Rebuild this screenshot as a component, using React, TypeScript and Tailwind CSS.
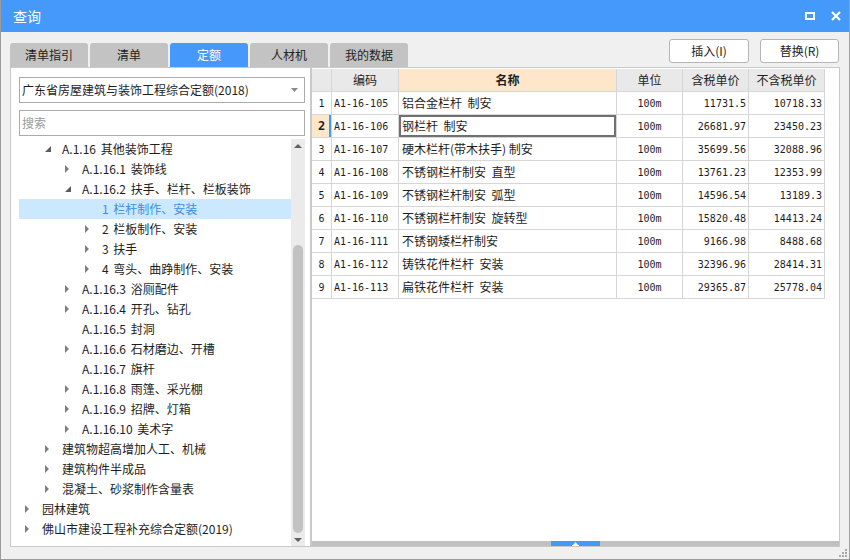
import type { ReactNode } from 'react';

type Arrow = 'open' | 'closed' | 'none';

interface TreeNode {
  level: number;
  text: string;
  arrow: Arrow;
  selected?: boolean;
}

const tree: TreeNode[] = [
  { level: 1, text: 'A.1.16 其他装饰工程', arrow: 'open' },
  { level: 2, text: 'A.1.16.1 装饰线', arrow: 'closed' },
  { level: 2, text: 'A.1.16.2 扶手、栏杆、栏板装饰', arrow: 'open' },
  { level: 3, text: '1 栏杆制作、安装', arrow: 'none', selected: true },
  { level: 3, text: '2 栏板制作、安装', arrow: 'closed' },
  { level: 3, text: '3 扶手', arrow: 'closed' },
  { level: 3, text: '4 弯头、曲踭制作、安装', arrow: 'closed' },
  { level: 2, text: 'A.1.16.3 浴厕配件', arrow: 'closed' },
  { level: 2, text: 'A.1.16.4 开孔、钻孔', arrow: 'closed' },
  { level: 2, text: 'A.1.16.5 封洞', arrow: 'none' },
  { level: 2, text: 'A.1.16.6 石材磨边、开槽', arrow: 'closed' },
  { level: 2, text: 'A.1.16.7 旗杆', arrow: 'none' },
  { level: 2, text: 'A.1.16.8 雨篷、采光棚', arrow: 'closed' },
  { level: 2, text: 'A.1.16.9 招牌、灯箱', arrow: 'closed' },
  { level: 2, text: 'A.1.16.10 美术字', arrow: 'closed' },
  { level: 1, text: '建筑物超高增加人工、机械', arrow: 'closed' },
  { level: 1, text: '建筑构件半成品', arrow: 'closed' },
  { level: 1, text: '混凝土、砂浆制作含量表', arrow: 'closed' },
  { level: 0, text: '园林建筑', arrow: 'closed' },
  { level: 0, text: '佛山市建设工程补充综合定额(2019)', arrow: 'closed' },
];

const indent = ['pl-0', 'pl-5', 'pl-10', 'pl-15'];

const rows: [string, string, string, string, string][] = [
  ['A1-16-105', '铝合金栏杆  制安', '100m', '11731.5', '10718.33'],
  ['A1-16-106', '钢栏杆  制安', '100m', '26681.97', '23450.23'],
  ['A1-16-107', '硬木栏杆(带木扶手) 制安', '100m', '35699.56', '32088.96'],
  ['A1-16-108', '不锈钢栏杆制安  直型', '100m', '13761.23', '12353.99'],
  ['A1-16-109', '不锈钢栏杆制安  弧型', '100m', '14596.54', '13189.3'],
  ['A1-16-110', '不锈钢栏杆制安  旋转型', '100m', '15820.48', '14413.24'],
  ['A1-16-111', '不锈钢矮栏杆制安', '100m', '9166.98', '8488.68'],
  ['A1-16-112', '铸铁花件栏杆  安装', '100m', '32396.96', '28414.31'],
  ['A1-16-113', '扁铁花件栏杆  安装', '100m', '29365.87', '25778.04'],
];

const tabs = ['清单指引', '清单', '定额', '人材机', '我的数据'];

const mono = "font-['DejaVu_Sans_Mono',monospace] text-[10px]";

function TreeArrow({ kind }: { kind: Arrow }) {
  if (kind === 'open') {
    return (
      <svg width="6" height="6" viewBox="0 0 6 6">
        <polygon points="6,0 6,6 0,6" fill="#5c5c5c" />
      </svg>
    );
  }
  if (kind === 'closed') {
    return (
      <svg width="4" height="8" viewBox="0 0 4 8">
        <polygon points="0,0 4,4 0,8" fill="#808080" />
      </svg>
    );
  }
  return null;
}

function Cell({ children, className = '' }: { children?: ReactNode; className?: string }) {
  return (
    <div className={`h-[23px] border-r border-b border-[#d6d6d6] flex items-center ${className}`}>
      {children}
    </div>
  );
}

export default function App() {
  return (
    <div className="w-[850px] h-[560px] flex flex-col bg-[#f0f0f0] border-x border-b border-[#9c9c9c] font-['Noto_Sans_CJK_SC',sans-serif] text-[12px] text-[#1e1e1e] overflow-hidden">
      {/* Title bar */}
      <div className="h-[32px] flex-none bg-[#4499fb] flex items-center justify-between pl-[12px] pr-[8px]">
        <span className="text-white text-[14px] leading-none">查询</span>
        <div className="flex items-center gap-[16px]">
          <div className="w-[10px] h-[8px] border-2 border-white" />
          <svg width="10" height="10" viewBox="0 0 10 10">
            <path d="M1 1 L9 9 M9 1 L1 9" stroke="white" strokeWidth="2.2" />
          </svg>
        </div>
      </div>

      <div className="flex-1 flex flex-col px-[9px]">
        {/* Tabs + buttons */}
        <div className="h-[35px] flex-none flex justify-between items-end">
          <div className="flex gap-[2px]">
            {tabs.map(t => (
              <div
                key={t}
                className={`w-[78px] h-[24px] rounded-t-[3px] flex items-center justify-center text-[12px] leading-none ${
                  t === '定额' ? 'bg-[#4499fb] text-white' : 'bg-[#c3c3c3] text-[#222]'
                }`}
              >
                {t}
              </div>
            ))}
          </div>
          <div className="self-start mt-[7px] mr-[1px] flex gap-[11px]">
            <button className="w-[80px] h-[24px] bg-white border border-[#b5b5b5] rounded-[3px] text-[12px] leading-none text-[#222]">
              插入(I)
            </button>
            <button className="w-[79px] h-[24px] bg-white border border-[#b5b5b5] rounded-[3px] text-[12px] leading-none text-[#222]">
              替换(R)
            </button>
          </div>
        </div>

        {/* Main panels */}
        <div className="h-[480px] flex-none flex">
          {/* Left tree panel */}
          <div className="w-[301px] flex-none bg-white border border-[#c9c9c9] flex flex-col">
            <div className="mt-[9px] ml-[8px] mr-[5px] h-[26px] border border-[#ababab] flex items-center justify-between pl-[2px] pr-[6px]">
              <span className="leading-none">广东省房屋建筑与装饰工程综合定额(2018)</span>
              <svg width="7" height="4" viewBox="0 0 7 4">
                <polygon points="0,0 7,0 3.5,4" fill="#8a8a8a" />
              </svg>
            </div>
            <div className="mt-[7px] ml-[8px] mr-[5px] h-[26px] border border-[#ababab] flex items-center pl-[2px]">
              <span className="leading-none text-[#9a9a9a]">搜索</span>
            </div>
            <div className="mt-[3px] ml-[8px] mr-[5px] flex-1 flex min-h-0">
              <div className="flex-1">
                {tree.map((n, i) => (
                  <div
                    key={i}
                    className={`h-[20px] flex items-center ${indent[n.level]} ${
                      n.selected ? 'bg-[#cce8ff] text-[#3a8ee6]' : ''
                    }`}
                  >
                    <span className="w-[23px] flex-none pl-[6px] flex items-center">
                      <TreeArrow kind={n.arrow} />
                    </span>
                    <span className="leading-none whitespace-nowrap [word-spacing:2px]">{n.text}</span>
                  </div>
                ))}
              </div>
              {/* Vertical scrollbar */}
              <div className="w-[14px] flex-none bg-[#ebebeb] flex flex-col items-center">
                <div className="h-[14px] flex-none flex items-center justify-center">
                  <svg width="8" height="4" viewBox="0 0 8 4">
                    <polygon points="4,0 8,4 0,4" fill="#606060" />
                  </svg>
                </div>
                <div className="h-[92px] flex-none" />
                <div className="h-[288px] w-[10px] flex-none bg-[#c2c2c2] rounded-[5px]" />
                <div className="flex-1" />
                <div className="h-[14px] flex-none flex items-center justify-center">
                  <svg width="8" height="4" viewBox="0 0 8 4">
                    <polygon points="0,0 8,0 4,4" fill="#606060" />
                  </svg>
                </div>
              </div>
            </div>
          </div>

          {/* Right grid panel */}
          <div className="flex-1 bg-white border border-[#c9c9c9] flex flex-col">
            <div className="pt-[1px] grid grid-cols-[20px_67px_218px_66px_66px_76px] w-[513px]">
              <Cell className="bg-[#e9e9e9]" />
              <Cell className="bg-[#e9e9e9] justify-center">编码</Cell>
              <Cell className="bg-[#fde6c9] justify-center font-bold">名称</Cell>
              <Cell className="bg-[#e9e9e9] justify-center">单位</Cell>
              <Cell className="bg-[#e9e9e9] justify-center">含税单价</Cell>
              <Cell className="bg-[#e9e9e9] justify-center">不含税单价</Cell>
              {rows.map((r, i) => {
                const sel = i === 1;
                return [
                  <Cell
                    key={`n${i}`}
                    className={`justify-center ${mono} ${
                      sel ? 'bg-[#fde6c9] font-bold text-[12px] shadow-[inset_-2px_0_0_#3b9bff]' : ''
                    }`}
                  >
                    {i + 1}
                  </Cell>,
                  <Cell key={`c${i}`} className={`pl-[2px] ${mono}`}>
                    {r[0]}
                  </Cell>,
                  <Cell
                    key={`m${i}`}
                    className={`pl-[3px] whitespace-pre ${sel ? 'shadow-[inset_0_0_0_2px_#707070]' : ''}`}
                  >
                    {r[1]}
                  </Cell>,
                  <Cell key={`u${i}`} className={`justify-center ${mono}`}>
                    {r[2]}
                  </Cell>,
                  <Cell key={`p${i}`} className={`justify-end pr-[2px] ${mono}`}>
                    {r[3]}
                  </Cell>,
                  <Cell key={`q${i}`} className={`justify-end pr-[2px] ${mono}`}>
                    {r[4]}
                  </Cell>,
                ];
              })}
            </div>
            <div className="flex-1" />
            {/* Splitter bar */}
            <div className="h-[5px] flex-none bg-[#c0c0c0] flex justify-center">
              <div className="w-[49px] bg-[#4499fb] flex items-center justify-center">
                <svg width="7" height="4" viewBox="0 0 7 4">
                  <polygon points="3.5,0 6,3 1,3" fill="white" />
                  <rect x="0" y="3" width="7" height="1" fill="white" />
                </svg>
              </div>
            </div>
          </div>
        </div>

        {/* Bottom strip with resize grip */}
        <div className="flex-1 flex justify-end items-end pb-[1px] -mr-[8px]">
          <svg width="9" height="9" viewBox="0 0 9 9">
            <rect x="6" y="0" width="2" height="2" fill="#a8a8a8" />
            <rect x="3" y="3" width="2" height="2" fill="#a8a8a8" />
            <rect x="6" y="3" width="2" height="2" fill="#a8a8a8" />
            <rect x="0" y="6" width="2" height="2" fill="#a8a8a8" />
            <rect x="3" y="6" width="2" height="2" fill="#a8a8a8" />
            <rect x="6" y="6" width="2" height="2" fill="#a8a8a8" />
          </svg>
        </div>
      </div>
    </div>
  );
}
